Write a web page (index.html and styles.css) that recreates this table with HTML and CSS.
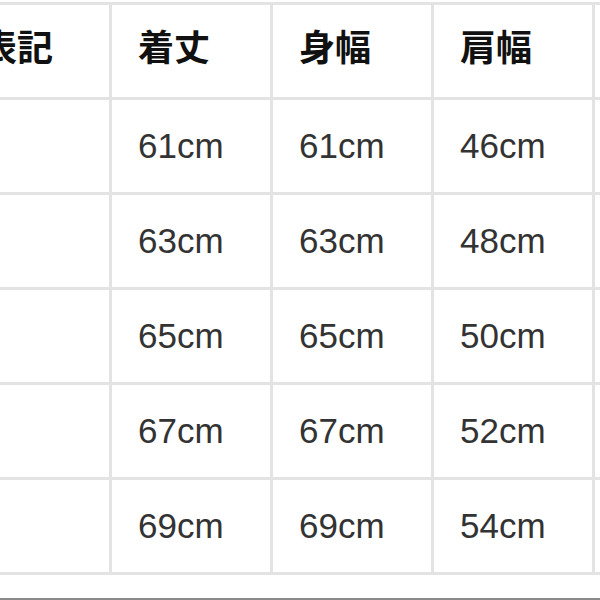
FILE: index.html
```html
<!DOCTYPE html>
<html lang="ja">
<head>
<meta charset="utf-8">
<title>サイズ表</title>
<link rel="stylesheet" href="styles.css">
</head>
<body>
<div class="page">
  <div class="sheet">
    <div class="cell head">表記</div>
    <div class="cell head">着丈</div>
    <div class="cell head">身幅</div>
    <div class="cell head">肩幅</div>
    <div class="cell head"></div>

    <div class="cell"></div>
    <div class="cell">61cm</div>
    <div class="cell">61cm</div>
    <div class="cell">46cm</div>
    <div class="cell"></div>

    <div class="cell"></div>
    <div class="cell">63cm</div>
    <div class="cell">63cm</div>
    <div class="cell">48cm</div>
    <div class="cell"></div>

    <div class="cell"></div>
    <div class="cell">65cm</div>
    <div class="cell">65cm</div>
    <div class="cell">50cm</div>
    <div class="cell"></div>

    <div class="cell"></div>
    <div class="cell">67cm</div>
    <div class="cell">67cm</div>
    <div class="cell">52cm</div>
    <div class="cell"></div>

    <div class="cell"></div>
    <div class="cell">69cm</div>
    <div class="cell">69cm</div>
    <div class="cell">54cm</div>
    <div class="cell"></div>
  </div>
  <div class="edge"></div>
</div>
</body>
</html>
```

FILE: styles.css
```css
html, body {
  margin: 0;
  padding: 0;
  background: #ffffff;
}

.page {
  width: 600px;
  height: 600px;
  overflow: hidden;
}

.sheet {
  display: grid;
  grid-template-columns: 154px 158px 158px 158px 158px;
  grid-auto-rows: 92px;
  gap: 3px;
  padding: 3px;
  margin: 2px 0 0 -48px;
  width: max-content;
  background: #e3e3e3;
}

.cell {
  background: #ffffff;
  display: flex;
  align-items: center;
  padding-left: 26px;
  font-family: "Liberation Sans", Arial, sans-serif;
  font-size: 35px;
  color: #333333;
}

.head {
  font-family: "Noto Sans CJK JP", "Noto Sans", sans-serif;
  font-weight: 700;
  font-size: 36px;
  color: #111111;
  padding-bottom: 13px;
}

.edge {
  height: 23px;
  border-bottom: 2px solid #8a8a8a;
}
```
